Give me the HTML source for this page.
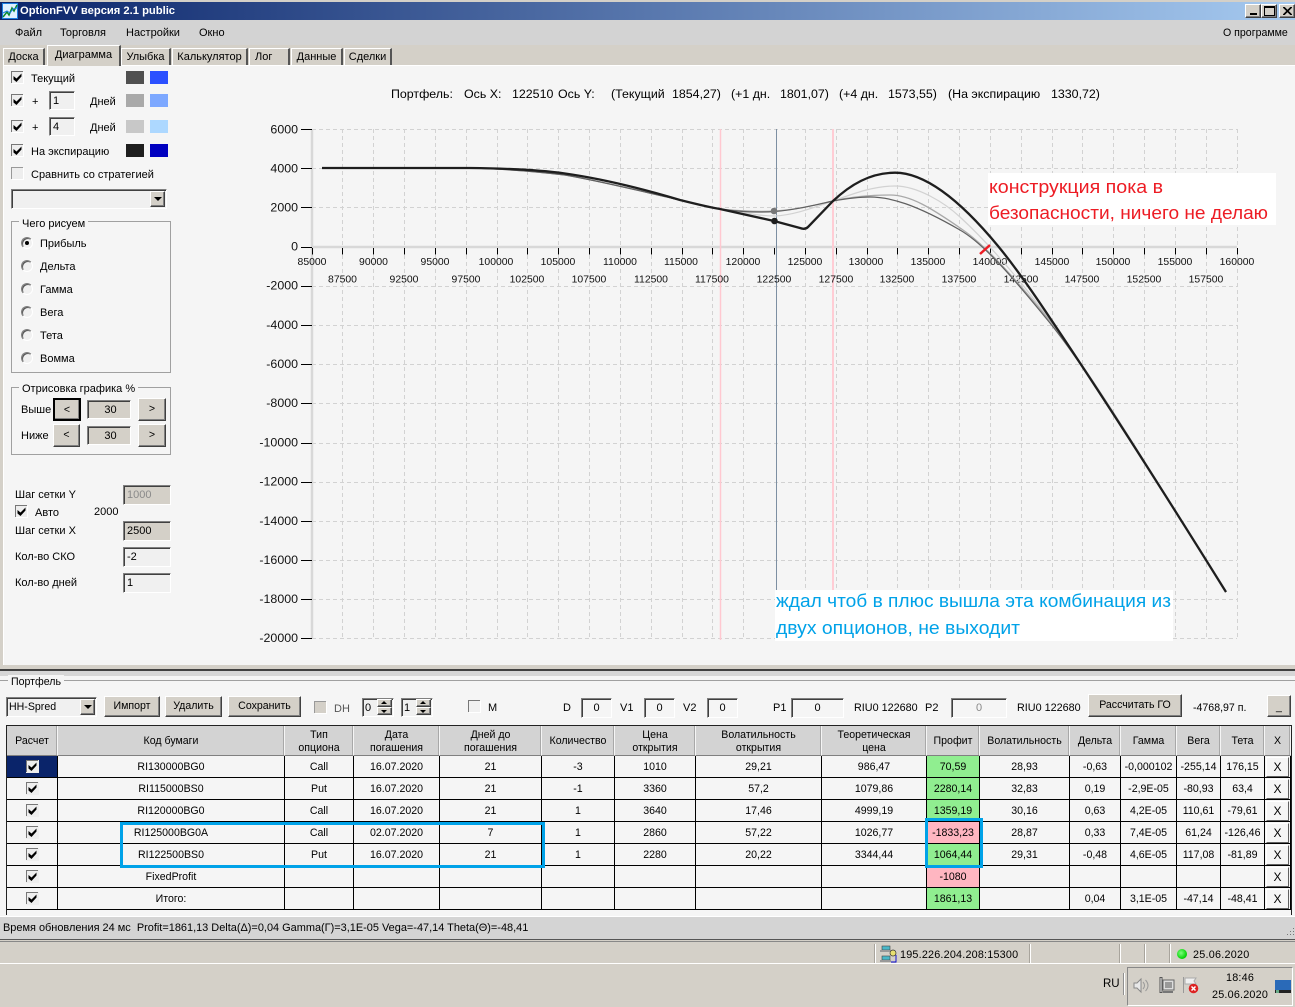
<!DOCTYPE html>
<html lang="ru"><head><meta charset="utf-8"><title>OptionFVV</title>
<style>
html,body{margin:0;padding:0}
body{width:1295px;height:1007px;overflow:hidden;position:relative;background:#d4d0c8;font:11px/14px "Liberation Sans",sans-serif;color:#000}
div,svg,span.a{position:absolute}
.t{white-space:pre}
.h{font-size:12.4px;top:87px;white-space:pre}
.b{box-sizing:border-box;background:#d4d0c8;border:1px solid;border-color:#fff #404040 #404040 #fff;box-shadow:inset -1px -1px #808080;text-align:center;font-size:10.6px}
.s{box-sizing:border-box;border:1px solid;border-color:#808080 #fff #fff #808080;box-shadow:inset 1px 1px #404040;background:#f0f0f0;padding-left:3px;font-size:11px}
.g{border:1px solid #a0a0a0;box-sizing:border-box}
.l{background:#f5f5f5;padding:0 3px}
.r{box-sizing:border-box;width:12px;height:12px;border-radius:50%;background:#f0f0f0;border:1px solid;border-color:#808080 #fff #fff #808080;box-shadow:inset 1px 1px #555}
.tab{box-sizing:border-box;background:#d4d0c8;border-top:1px solid #fff;border-left:1px solid #fff;border-right:2px solid #555;text-align:center;height:18px;top:48px;line-height:17px;font-size:11px}
table{position:absolute;left:7px;top:726px;border-collapse:separate;border-spacing:0;table-layout:fixed;width:1284px;font-size:10.6px;background:#f5f5f5}
td{padding:1px 0 0;text-align:center;border-right:1px solid #000;border-bottom:1px solid #000;height:22px;box-sizing:border-box;line-height:13px;position:relative;white-space:nowrap;overflow:hidden}
th{padding:2.500px 0 0;font-weight:normal;background:#d3d3d3;height:30px;box-sizing:border-box;border-right:1px solid #f5f5f5;border-bottom:1px solid #808080;box-shadow:inset -1px 0 #a8a8a8;line-height:13px}
td svg,.ck{position:static;vertical-align:middle}
.gn{background:#90ee90}.pk{background:#ffb6c1}
.x{display:block;box-sizing:border-box;height:20px;width:23px;margin:-1px 0 0 1px;border:1px solid;border-color:#fff #606060 #606060 #fff;background:#f5f5f5;line-height:18px;font-size:12px}
</style></head><body>

<!-- title bar -->
<div style="left:0;top:2px;width:1295px;height:18px;background:linear-gradient(90deg,#0a246a,#a6caf0)"></div>
<svg style="left:2px;top:3px" width="16" height="16" viewBox="0 0 16 16"><rect width="16" height="16" fill="#1c7ee0"/><rect x="1" y="1" width="14" height="14" fill="#dff0ff"/><path d="M1 14l4-5 2 3 3-7 2 3 3-6" fill="none" stroke="#0a8a2a" stroke-width="1.5"/><path d="M1 10l4-2 3 2 3-4 4-1" fill="none" stroke="#1c7ee0"/></svg>
<div class="t" style="left:20px;top:4px;color:#fff;font-weight:bold;font-size:11.2px">OptionFVV версия 2.1 public</div>
<div class="b" style="left:1245px;top:4px;width:16px;height:14px"><div style="left:4px;bottom:2px;width:7px;height:2px;background:#000"></div></div>
<div class="b" style="left:1261px;top:4px;width:16px;height:14px"><div style="left:2px;top:1px;width:9px;height:7px;border:1px solid #000;border-top-width:2px"></div></div>
<div class="b" style="left:1279px;top:4px;width:16px;height:14px"><svg style="left:3px;top:2px" width="9" height="8"><path d="M0 0l8 8M1 0l8 8M8 0l-8 8M9 0l-8 8" stroke="#000" stroke-width="1"/></svg></div>

<!-- menu -->
<div style="left:0;top:20px;width:1295px;height:25px;background:#d3d3d3"></div>
<div class="t" style="left:15px;top:26px">Файл</div>
<div class="t" style="left:60px;top:26px">Торговля</div>
<div class="t" style="left:126px;top:26px">Настройки</div>
<div class="t" style="left:199px;top:26px">Окно</div>
<div class="t" style="left:1223px;top:26px;font-size:10.6px">О программе</div>

<!-- tabs -->
<div class="tab" style="left:3px;width:42px">Доска</div>
<div class="tab" style="left:47px;width:74px;top:45px;height:21px;line-height:19px;background:#d4d0c8;z-index:3">Диаграмма</div>
<div class="tab" style="left:121px;width:50px">Улыбка</div>
<div class="tab" style="left:172px;width:76px">Калькулятор</div>
<div class="tab" style="left:249px;width:41px;text-align:left;padding-left:5px">Лог</div>
<div class="tab" style="left:291px;width:52px">Данные</div>
<div class="tab" style="left:344px;width:48px">Сделки</div>

<!-- main panel -->
<div style="left:3px;top:65px;width:1292px;height:604px;background:#f5f5f5;border-top:1px solid #fff;border-left:1px solid #fff;box-sizing:border-box"></div>

<!-- left controls -->
<svg style="left:11px;top:71px" width="13" height="13"><path d="M.5 12V.5H12" stroke="#777" fill="none"/><path d="M12.5 1v11.5H1" stroke="#fff" fill="none"/><rect x="1" y="1" width="11" height="11" fill="#eee"/><path d="M2.500 5v3.500l3 2.500 5-5.500V2.500L5.500 7.500z"/></svg>
<div class="t" style="left:31px;top:72px">Текущий</div>
<div style="left:126px;top:71px;width:18px;height:13px;background:#505050"></div>
<div style="left:150px;top:71px;width:18px;height:13px;background:#2b50ff"></div>

<svg style="left:11px;top:94px" width="13" height="13"><path d="M.5 12V.5H12" stroke="#777" fill="none"/><path d="M12.5 1v11.5H1" stroke="#fff" fill="none"/><rect x="1" y="1" width="11" height="11" fill="#eee"/><path d="M2.500 5v3.500l3 2.500 5-5.500V2.500L5.500 7.500z"/></svg>
<div class="t" style="left:32px;top:95px">+</div>
<div class="s" style="left:49px;top:91px;width:26px;height:19px;line-height:18px">1</div>
<div class="t" style="left:90px;top:95px">Дней</div>
<div style="left:126px;top:94px;width:18px;height:13px;background:#a9a9a9"></div>
<div style="left:150px;top:94px;width:18px;height:13px;background:#7da8ff"></div>

<svg style="left:11px;top:120px" width="13" height="13"><path d="M.5 12V.5H12" stroke="#777" fill="none"/><path d="M12.5 1v11.5H1" stroke="#fff" fill="none"/><rect x="1" y="1" width="11" height="11" fill="#eee"/><path d="M2.500 5v3.500l3 2.500 5-5.500V2.500L5.500 7.500z"/></svg>
<div class="t" style="left:32px;top:121px">+</div>
<div class="s" style="left:49px;top:117px;width:26px;height:19px;line-height:18px">4</div>
<div class="t" style="left:90px;top:121px">Дней</div>
<div style="left:126px;top:120px;width:18px;height:13px;background:#c8c8c8"></div>
<div style="left:150px;top:120px;width:18px;height:13px;background:#add8ff"></div>

<svg style="left:11px;top:144px" width="13" height="13"><path d="M.5 12V.5H12" stroke="#777" fill="none"/><path d="M12.5 1v11.5H1" stroke="#fff" fill="none"/><rect x="1" y="1" width="11" height="11" fill="#eee"/><path d="M2.500 5v3.500l3 2.500 5-5.500V2.500L5.500 7.500z"/></svg>
<div class="t" style="left:31px;top:145px">На экспирацию</div>
<div style="left:126px;top:144px;width:18px;height:13px;background:#1e1e1e"></div>
<div style="left:150px;top:144px;width:18px;height:13px;background:#0000c0"></div>

<svg style="left:11px;top:167px" width="13" height="13"><path d="M.5 12V.5H12" stroke="#999" fill="none"/><path d="M12.5 1v11.5H1" stroke="#fff" fill="none"/><rect x="1" y="1" width="11" height="11" fill="#eee"/></svg>
<div class="t" style="left:31px;top:168px">Сравнить со стратегией</div>

<div class="s" style="left:11px;top:189px;width:156px;height:20px"></div>
<div class="b" style="left:150px;top:191px;width:15px;height:16px"><div style="left:3px;top:5px;width:0;height:0;border:4px solid transparent;border-top:4px solid #000"></div></div>

<div class="g" style="left:11px;top:221px;width:160px;height:152px"></div>
<div class="t l" style="left:19px;top:217px">Чего рисуем</div>
<div class="r" style="left:21px;top:237px"><div style="left:3px;top:3px;width:4px;height:4px;border-radius:50%;background:#000"></div></div>
<div class="t" style="left:40px;top:237px">Прибыль</div>
<div class="r" style="left:21px;top:260px"></div><div class="t" style="left:40px;top:260px">Дельта</div>
<div class="r" style="left:21px;top:283px"></div><div class="t" style="left:40px;top:283px">Гамма</div>
<div class="r" style="left:21px;top:306px"></div><div class="t" style="left:40px;top:306px">Вега</div>
<div class="r" style="left:21px;top:329px"></div><div class="t" style="left:40px;top:329px">Тета</div>
<div class="r" style="left:21px;top:352px"></div><div class="t" style="left:40px;top:352px">Вомма</div>

<div class="g" style="left:11px;top:387px;width:160px;height:68px"></div>
<div class="t l" style="left:19px;top:382px">Отрисовка графика %</div>
<div class="t" style="left:21px;top:403px">Выше</div>
<div class="b" style="left:53px;top:398px;width:28px;height:23px;line-height:20px;border:2px solid #000">&lt;</div>
<div class="s" style="left:87px;top:400px;width:44px;height:19px;background:#d4d0c8;text-align:center;line-height:18px">30</div>
<div class="b" style="left:138px;top:398px;width:28px;height:23px;line-height:21px">&gt;</div>
<div class="t" style="left:21px;top:429px">Ниже</div>
<div class="b" style="left:53px;top:424px;width:27px;height:23px;line-height:21px">&lt;</div>
<div class="s" style="left:87px;top:426px;width:44px;height:19px;background:#d4d0c8;text-align:center;line-height:18px">30</div>
<div class="b" style="left:138px;top:424px;width:28px;height:23px;line-height:21px">&gt;</div>

<div class="t" style="left:15px;top:488px">Шаг сетки Y</div>
<div class="s" style="left:123px;top:485px;width:48px;height:20px;background:#d4d0c8;color:#8a8a8a;line-height:18px">1000</div>
<svg style="left:15px;top:505px" width="13" height="13"><path d="M.5 12V.5H12" stroke="#777" fill="none"/><path d="M12.5 1v11.5H1" stroke="#fff" fill="none"/><rect x="1" y="1" width="11" height="11" fill="#eee"/><path d="M2.500 5v3.500l3 2.500 5-5.500V2.500L5.500 7.500z"/></svg>
<div class="t" style="left:35px;top:506px">Авто</div>
<div class="t" style="left:94px;top:505px">2000</div>
<div class="t" style="left:15px;top:524px">Шаг сетки X</div>
<div class="s" style="left:123px;top:521px;width:48px;height:20px;background:#d4d0c8;line-height:18px">2500</div>
<div class="t" style="left:15px;top:550px">Кол-во СКО</div>
<div class="s" style="left:123px;top:547px;width:48px;height:20px;line-height:18px">-2</div>
<div class="t" style="left:15px;top:576px">Кол-во дней</div>
<div class="s" style="left:123px;top:573px;width:48px;height:20px;line-height:18px">1</div>

<!-- chart title -->
<div class="h" style="left:391px">Портфель:</div>
<div class="h" style="left:464px">Ось X:</div>
<div class="h" style="left:512px">122510</div>
<div class="h" style="left:558px">Ось Y:</div>
<div class="h" style="left:611px">(Текущий</div>
<div class="h" style="left:672px">1854,27)</div>
<div class="h" style="left:731px">(+1 дн.</div>
<div class="h" style="left:780px">1801,07)</div>
<div class="h" style="left:839px">(+4 дн.</div>
<div class="h" style="left:888px">1573,55)</div>
<div class="h" style="left:948px">(На экспирацию</div>
<div class="h" style="left:1051px">1330,72)</div>

<!-- chart -->
<svg style="left:0;top:0" width="1295" height="670" viewBox="0 0 1295 670" font-family="Liberation Sans, sans-serif">
<g stroke="#d2d2d2" stroke-dasharray="4 3" fill="none">
<path d="M312 129.5H1237M312 168.500H1237M312 207.500H1237M312 286.500H1237M312 325.500H1237M312 364.500H1237M312 403.500H1237M312 443.500H1237M312 482.500H1237M312 521.500H1237M312 560.500H1237M312 599.500H1237M312 638.500H1237"/>
<path d="M342.500 129V638M373.500 129V638M404.500 129V638M435.500 129V638M466.500 129V638M497.500 129V638M527.500 129V638M558.500 129V638M589.500 129V638M620.500 129V638M651.500 129V638M682.500 129V638M712.500 129V638M743.500 129V638M805.500 129V638M836.500 129V638M867.500 129V638M897.500 129V638M928.500 129V638M959.500 129V638M990.500 129V638M1021.500 129V638M1052.500 129V638M1082.500 129V638M1113.500 129V638M1144.500 129V638M1175.500 129V638M1206.500 129V638M1237.500 129V638"/>
</g>
<path d="M312 129V638" stroke="#d8d8d8" stroke-width="2.500"/>
<path d="M312 247H1237" stroke="#d8d8d8" stroke-width="2.500"/>
<path d="M720.500 129V640" stroke="#ffc8d0" stroke-width="1.500"/><path d="M833 129V640" stroke="#ffccd4" stroke-width="2"/>
<path d="M776.500 129V640" stroke="#7d8fa2"/>
<g stroke="#000">
<path d="M301 129.500h11M301 168.500h11M301 207.500h11M301 247.500h11M301 286.500h11M301 325.500h11M301 364.500h11M301 403.500h11M301 443.500h11M301 482.500h11M301 521.500h11M301 560.500h11M301 599.500h11M301 638.500h11"/>
<path d="M312.500 248v6.500M342.500 248v6.500M373.500 248v6.500M404.500 248v6.500M435.500 248v6.500M466.500 248v6.500M497.500 248v6.500M527.500 248v6.500M558.500 248v6.500M589.500 248v6.500M620.500 248v6.500M651.500 248v6.500M682.500 248v6.500M712.500 248v6.500M743.500 248v6.500M774.500 248v6.500M805.500 248v6.500M836.500 248v6.500M867.500 248v6.500M897.500 248v6.500M928.500 248v6.500M959.500 248v6.500M990.500 248v6.500M1021.500 248v6.500M1052.500 248v6.500M1082.500 248v6.500M1113.500 248v6.500M1144.500 248v6.500M1175.500 248v6.500M1206.500 248v6.500M1237.500 248v6.500"/>
</g>
<g font-size="12.4" text-anchor="end" fill="#111">
<text x="298" y="133.500">6000</text><text x="298" y="172.500">4000</text><text x="298" y="211.500">2000</text><text x="298" y="250.500">0</text><text x="298" y="289.500">-2000</text><text x="298" y="329">-4000</text><text x="298" y="368">-6000</text><text x="298" y="407">-8000</text><text x="298" y="446.500">-10000</text><text x="298" y="485.500">-12000</text><text x="298" y="525">-14000</text><text x="298" y="564">-16000</text><text x="298" y="603">-18000</text><text x="298" y="642">-20000</text>
</g>
<g font-size="10.4" text-anchor="middle" fill="#111">
<text x="312" y="265">85000</text><text x="373.500" y="265">90000</text><text x="435" y="265">95000</text><text x="496" y="265">100000</text><text x="558" y="265">105000</text><text x="620" y="265">110000</text><text x="681" y="265">115000</text><text x="743" y="265">120000</text><text x="805" y="265">125000</text><text x="866" y="265">130000</text><text x="928" y="265">135000</text><text x="990" y="265">140000</text><text x="1052" y="265">145000</text><text x="1113" y="265">150000</text><text x="1175" y="265">155000</text><text x="1237" y="265">160000</text>
<text x="342.500" y="282.500">87500</text><text x="404" y="282.500">92500</text><text x="466" y="282.500">97500</text><text x="527" y="282.500">102500</text><text x="589" y="282.500">107500</text><text x="651" y="282.500">112500</text><text x="712" y="282.500">117500</text><text x="774" y="282.500">122500</text><text x="836" y="282.500">127500</text><text x="897" y="282.500">132500</text><text x="959" y="282.500">137500</text><text x="1021" y="282.500">142500</text><text x="1082" y="282.500">147500</text><text x="1144" y="282.500">152500</text><text x="1206" y="282.500">157500</text>
</g>
<g fill="none" stroke-linejoin="round">
<path d="M322 168H470C510 169 540 172 565 175C600 181 640 191 680 200C700 205 710 207 720 209C745 213 760 216 775 216C795 215 815 207 833 201C850 195 872 186 895 186C918 186 945 203 960 217C985 240 1017 276 1050 320C1085 366 1150 470 1226 592" stroke="#d2d2d2" stroke-width="1.200"/>
<path d="M322 168H470C510 169 540 172 565 175C600 181 640 191 680 200C700 205 710 207 720 209C740 211 760 212 775 211C795 210 815 205 833 201C850 197 870 195 890 195C910 195 930 207 963 230C985 245 1015 278 1050 321C1085 364 1150 470 1226 592" stroke="#a9a9a9" stroke-width="1.300"/>
<path d="M322 168H470C510 169 540 172 565 175C600 181 640 191 680 200C700 205 710 207 720 209C740 212 760 212.500 775 211.500C795 210 815 205 833 201C850 198 860 197 870 197C890 197 915 204 960 230C985 244.500 1015 280 1050 323C1085 366 1150 470 1226 592" stroke="#606060" stroke-width="1.200"/>
<path d="M322 168H470C510 168.500 540 170 565 173.500C600 178.500 640 188 680 200C700 205 710 207.500 720 209L774 221L800 228Q805 230 808 227L833 201C850 185 870 172.700 895 172.700C925 172.700 960 200 998 246C1010 260.500 1030 288 1050 318C1100 392 1150 470 1226 592" stroke="#1e1e1e" stroke-width="2.300"/>
</g>
<circle cx="774" cy="211" r="3.300" fill="#777"/>
<circle cx="774.500" cy="221" r="3.300" fill="#1e1e1e"/>
<rect x="988" y="173" width="288" height="52" fill="#fff"/>
<text x="989" y="193" font-size="18.5" fill="#ed1c24" textLength="174" lengthAdjust="spacingAndGlyphs">конструкция пока в</text>
<text x="989" y="219" font-size="18.5" fill="#ed1c24" textLength="279" lengthAdjust="spacingAndGlyphs">безопасности, ничего не делаю</text>
<path d="M980 254L990 245" stroke="#ed1c24" stroke-width="2.500"/>
<rect x="775" y="590" width="398" height="51" fill="#fff"/>
<text x="776" y="607" font-size="18.5" fill="#00a2e8" textLength="395" lengthAdjust="spacingAndGlyphs">ждал чтоб в плюс вышла эта комбинация из</text>
<text x="776" y="634" font-size="18.5" fill="#00a2e8" textLength="244" lengthAdjust="spacingAndGlyphs">двух опционов, не выходит</text>
</svg>

<!-- splitter + portfolio -->
<div style="left:0;top:665px;width:1295px;height:4px;background:#d4d0c8"></div>
<div style="left:0;top:669px;width:1295px;height:1.500px;background:#404040"></div>
<div style="left:0;top:671px;width:1295px;height:5px;background:#d6d6d6"></div>
<div style="left:0;top:676px;width:1295px;height:240px;background:#f5f5f5"></div>
<div style="left:0;top:680px;width:1295px;height:1px;background:#a0a0a0"></div>
<div class="t l" style="left:8px;top:675px;font-size:10.6px">Портфель</div>

<div class="s" style="left:6px;top:697px;width:91px;height:20px;line-height:18px;font-size:10.6px;padding-left:2px">HH-Spred</div>
<div class="b" style="left:80px;top:699px;width:15px;height:16px"><div style="left:3px;top:5px;width:0;height:0;border:4px solid transparent;border-top:4px solid #000"></div></div>
<div class="b" style="left:104px;top:696px;width:56px;height:21px;line-height:18px">Импорт</div>
<div class="b" style="left:165px;top:696px;width:57px;height:21px;line-height:18px">Удалить</div>
<div class="b" style="left:228px;top:696px;width:73px;height:21px;line-height:18px">Сохранить</div>
<svg style="left:314px;top:701px" width="13" height="13"><path d="M.5 12V.5H12" stroke="#999" fill="none"/><path d="M12.5 1v11.5H1" stroke="#fff" fill="none"/><rect x="1" y="1" width="11" height="11" fill="#d4d0c8"/></svg>
<div class="t" style="left:334px;top:702px;color:#555">DH</div>
<div class="s" style="left:362px;top:698px;width:32px;height:19px;line-height:18px;padding-left:2px">0</div>
<div class="b" style="left:377px;top:699px;width:15px;height:8px"><div style="left:3px;top:1px;width:0;height:0;border:3px solid transparent;border-bottom:3px solid #000;border-top:0"></div></div>
<div class="b" style="left:377px;top:707px;width:15px;height:8px"><div style="left:3px;top:2px;width:0;height:0;border:3px solid transparent;border-top:3px solid #000;border-bottom:0"></div></div>
<div class="s" style="left:401px;top:698px;width:32px;height:19px;line-height:18px;padding-left:2px">1</div>
<div class="b" style="left:416px;top:699px;width:15px;height:8px"><div style="left:3px;top:1px;width:0;height:0;border:3px solid transparent;border-bottom:3px solid #000;border-top:0"></div></div>
<div class="b" style="left:416px;top:707px;width:15px;height:8px"><div style="left:3px;top:2px;width:0;height:0;border:3px solid transparent;border-top:3px solid #000;border-bottom:0"></div></div>
<svg style="left:468px;top:700px" width="13" height="13"><path d="M.5 12V.5H12" stroke="#777" fill="none"/><path d="M12.5 1v11.5H1" stroke="#fff" fill="none"/><rect x="1" y="1" width="11" height="11" fill="#f0f0f0"/></svg>
<div class="t" style="left:488px;top:701px">M</div>
<div class="t" style="left:563px;top:701px">D</div>
<div class="s" style="left:581px;top:698px;width:31px;height:20px;background:#f5f5f5;text-align:center;padding:0;line-height:18px">0</div>
<div class="t" style="left:620px;top:701px">V1</div>
<div class="s" style="left:644px;top:698px;width:31px;height:20px;background:#f5f5f5;text-align:center;padding:0;line-height:18px">0</div>
<div class="t" style="left:683px;top:701px">V2</div>
<div class="s" style="left:707px;top:698px;width:31px;height:20px;background:#f5f5f5;text-align:center;padding:0;line-height:18px">0</div>
<div class="t" style="left:773px;top:701px">P1</div>
<div class="s" style="left:791px;top:698px;width:53px;height:20px;background:#f5f5f5;text-align:center;padding:0;line-height:18px">0</div>
<div class="t" style="left:854px;top:701px;font-size:10.8px">RIU0 122680</div>
<div class="t" style="left:925px;top:701px">P2</div>
<div class="s" style="left:951px;top:698px;width:56px;height:20px;background:#f5f5f5;text-align:center;padding:0;line-height:18px;color:#888">0</div>
<div class="t" style="left:1017px;top:701px;font-size:10.8px">RIU0 122680</div>
<div class="b" style="left:1088px;top:694px;width:94px;height:23px;line-height:21px">Рассчитать ГО</div>
<div class="t" style="left:1193px;top:701px;font-size:10.6px">-4768,97 п.</div>
<div class="b" style="left:1267px;top:695px;width:24px;height:22px;line-height:22px">_</div>

<!-- table -->
<div style="left:6px;top:725px;width:1286px;height:190px;background:#f5f5f5;border-top:1px solid #222;border-left:1px solid #222;border-right:1px solid #222;box-sizing:border-box"></div>
<table>
<colgroup><col style="width:51px"><col style="width:227px"><col style="width:69px"><col style="width:86px"><col style="width:102px"><col style="width:73px"><col style="width:81px"><col style="width:126px"><col style="width:105px"><col style="width:53px"><col style="width:90px"><col style="width:51px"><col style="width:56px"><col style="width:44px"><col style="width:44px"><col style="width:26px"></colgroup>
<tr><th>Расчет</th><th>Код бумаги</th><th>Тип<br>опциона</th><th>Дата<br>погашения</th><th>Дней до<br>погашения</th><th>Количество</th><th>Цена<br>открытия</th><th>Волатильность<br>открытия</th><th>Теоретическая<br>цена</th><th>Профит</th><th>Волатильность</th><th>Дельта</th><th>Гамма</th><th>Вега</th><th>Тета</th><th>X</th></tr>
<tr><td style="background:#0a246a"><svg class="ck" width="13" height="13"><rect width="13" height="13" fill="#eee"/><path d="M.5 12V.5H12" stroke="#777" fill="none"/><path d="M2.500 5v3.500l3 2.500 5-5.500V2.500L5.500 7.500z"/></svg></td><td>RI130000BG0</td><td>Call</td><td>16.07.2020</td><td>21</td><td>-3</td><td>1010</td><td>29,21</td><td>986,47</td><td class="gn">70,59</td><td>28,93</td><td>-0,63</td><td>-0,000102</td><td>-255,14</td><td>176,15</td><td><span class="x">X</span></td></tr>
<tr><td><svg class="ck" width="13" height="13"><rect width="13" height="13" fill="#eee"/><path d="M.5 12V.5H12" stroke="#777" fill="none"/><path d="M2.500 5v3.500l3 2.500 5-5.500V2.500L5.500 7.500z"/></svg></td><td>RI115000BS0</td><td>Put</td><td>16.07.2020</td><td>21</td><td>-1</td><td>3360</td><td>57,2</td><td>1079,86</td><td class="gn">2280,14</td><td>32,83</td><td>0,19</td><td>-2,9E-05</td><td>-80,93</td><td>63,4</td><td><span class="x">X</span></td></tr>
<tr><td><svg class="ck" width="13" height="13"><rect width="13" height="13" fill="#eee"/><path d="M.5 12V.5H12" stroke="#777" fill="none"/><path d="M2.500 5v3.500l3 2.500 5-5.500V2.500L5.500 7.500z"/></svg></td><td>RI120000BG0</td><td>Call</td><td>16.07.2020</td><td>21</td><td>1</td><td>3640</td><td>17,46</td><td>4999,19</td><td class="gn">1359,19</td><td>30,16</td><td>0,63</td><td>4,2E-05</td><td>110,61</td><td>-79,61</td><td><span class="x">X</span></td></tr>
<tr><td><svg class="ck" width="13" height="13"><rect width="13" height="13" fill="#eee"/><path d="M.5 12V.5H12" stroke="#777" fill="none"/><path d="M2.500 5v3.500l3 2.500 5-5.500V2.500L5.500 7.500z"/></svg></td><td>RI125000BG0A</td><td>Call</td><td>02.07.2020</td><td>7</td><td>1</td><td>2860</td><td>57,22</td><td>1026,77</td><td class="pk">-1833,23</td><td>28,87</td><td>0,33</td><td>7,4E-05</td><td>61,24</td><td>-126,46</td><td><span class="x">X</span></td></tr>
<tr><td><svg class="ck" width="13" height="13"><rect width="13" height="13" fill="#eee"/><path d="M.5 12V.5H12" stroke="#777" fill="none"/><path d="M2.500 5v3.500l3 2.500 5-5.500V2.500L5.500 7.500z"/></svg></td><td>RI122500BS0</td><td>Put</td><td>16.07.2020</td><td>21</td><td>1</td><td>2280</td><td>20,22</td><td>3344,44</td><td class="gn">1064,44</td><td>29,31</td><td>-0,48</td><td>4,6E-05</td><td>117,08</td><td>-81,89</td><td><span class="x">X</span></td></tr>
<tr><td><svg class="ck" width="13" height="13"><rect width="13" height="13" fill="#eee"/><path d="M.5 12V.5H12" stroke="#777" fill="none"/><path d="M2.500 5v3.500l3 2.500 5-5.500V2.500L5.500 7.500z"/></svg></td><td>FixedProfit</td><td></td><td></td><td></td><td></td><td></td><td></td><td></td><td class="pk">-1080</td><td></td><td></td><td></td><td></td><td></td><td><span class="x">X</span></td></tr>
<tr><td><svg class="ck" width="13" height="13"><rect width="13" height="13" fill="#eee"/><path d="M.5 12V.5H12" stroke="#777" fill="none"/><path d="M2.500 5v3.500l3 2.500 5-5.500V2.500L5.500 7.500z"/></svg></td><td>Итого:</td><td></td><td></td><td></td><td></td><td></td><td></td><td></td><td class="gn">1861,13</td><td></td><td>0,04</td><td>3,1E-05</td><td>-47,14</td><td>-48,41</td><td><span class="x">X</span></td></tr>
</table>
<div style="left:120px;top:822px;width:425px;height:46px;box-sizing:border-box;border:3px solid #00a2e8"></div>
<div style="left:925px;top:818px;width:58px;height:50px;box-sizing:border-box;border:3px solid #00a2e8"></div>

<!-- footer -->
<div style="left:0;top:916px;width:1295px;height:23px;background:#d4d4d4;border-top:1px solid #fff;box-sizing:border-box"></div>
<div class="t" style="left:3px;top:921px;font-size:10.95px">Время обновления 24 мс  Profit=1861,13 Delta(Δ)=0,04 Gamma(Г)=3,1E-05 Vega=-47,14 Theta(Θ)=-48,41</div>
<svg style="left:1284px;top:927px" width="11" height="11"><path d="M9 1h1v1H9zM6 4h1v1H6zM9 4h1v1H9zM3 7h1v1H3zM6 7h1v1H6zM9 7h1v1H9z" fill="#777"/></svg>
<div style="left:0;top:939px;width:1295px;height:1px;background:#555"></div>
<div style="left:0;top:941px;width:1295px;height:1px;background:#888"></div>

<!-- status bar -->
<div style="left:0;top:963px;width:1295px;height:1px;background:#fff"></div>
<div style="left:875px;top:944px;width:1px;height:19px;background:#fff;box-shadow:-1px 0 #a8a49c"></div>
<div style="left:1030px;top:944px;width:1px;height:19px;background:#fff;box-shadow:-1px 0 #a8a49c"></div>
<div style="left:1120px;top:944px;width:1px;height:19px;background:#fff;box-shadow:-1px 0 #a8a49c"></div>
<div style="left:1145px;top:944px;width:1px;height:19px;background:#fff;box-shadow:-1px 0 #a8a49c"></div>
<div style="left:1170px;top:944px;width:1px;height:19px;background:#fff;box-shadow:-1px 0 #a8a49c"></div>
<svg style="left:879px;top:945px" width="18" height="18"><rect x="3" y="1" width="8" height="4" fill="#4ab8c8" stroke="#444" stroke-width=".6"/><rect x="1" y="5" width="11" height="2" fill="#999"/><rect x="3" y="11" width="8" height="4" fill="#4ab8c8" stroke="#444" stroke-width=".6"/><rect x="1" y="15" width="11" height="2" fill="#999"/><circle cx="14" cy="8" r="3" fill="#e8e070" stroke="#333" stroke-width=".7"/><path d="M12 17h5v-7" fill="none" stroke="#00c" stroke-width=".9"/></svg>
<div class="t" style="left:900px;top:948px;font-size:10.8px;letter-spacing:.2px">195.226.204.208:15300</div>
<div style="left:1177px;top:949px;width:10px;height:10px;border-radius:50%;background:radial-gradient(circle at 40% 40%,#7dff7d,#00d000 70%)"></div>
<div class="t" style="left:1193px;top:948px;font-size:10.8px;letter-spacing:.25px">25.06.2020</div>

<!-- tray -->
<div class="t" style="left:1103px;top:977px;font-size:11.5px">RU</div>
<div style="left:1123px;top:973px;width:1px;height:22px;background:#909090;box-shadow:1px 0 #fff"></div>
<div style="left:1127px;top:967px;width:166px;height:39px;box-sizing:border-box;border:1px solid;border-color:#888 #fff #fff #888"></div>
<svg style="left:1133px;top:977px" width="17" height="17" fill="none"><path d="M1 6h3l4-4v13l-4-4H1z" fill="#e8e8e8" stroke="#888"/><path d="M10 5q3 3.500 0 7M12.500 3q5 5.500 0 11" stroke="#999"/></svg>
<svg style="left:1158px;top:977px" width="17" height="17"><rect x="5" y="3" width="11" height="10" fill="#ddd" stroke="#666"/><rect x="7" y="5" width="7" height="6" fill="#999"/><path d="M3 0v16" stroke="#555" stroke-width="3"/><path d="M3 1v14" stroke="#eee"/><rect x="5" y="14" width="10" height="2" fill="#777"/></svg>
<svg style="left:1182px;top:977px" width="17" height="17"><path d="M1.500 0v16" stroke="#999"/><path d="M3 1h11l-2 3 2 3H3z" fill="#f0f0f0" stroke="#aaa"/><circle cx="11.500" cy="11.500" r="4.800" fill="#d22"/><path d="M9.500 9.500l4 4M13.500 9.500l-4 4" stroke="#fff" stroke-width="1.500"/></svg>
<div class="t" style="left:1226px;top:971px;font-size:10.8px;letter-spacing:.2px">18:46</div>
<div class="t" style="left:1212px;top:988px;font-size:10.8px;letter-spacing:.2px">25.06.2020</div>
<svg style="left:1275px;top:980px" width="16" height="13"><rect width="16" height="13" fill="#2a6ab8"/><rect y="10" width="16" height="3" fill="#222"/><rect x="1" y="10" width="3" height="3" fill="#6a8"/></svg>
</body></html>
